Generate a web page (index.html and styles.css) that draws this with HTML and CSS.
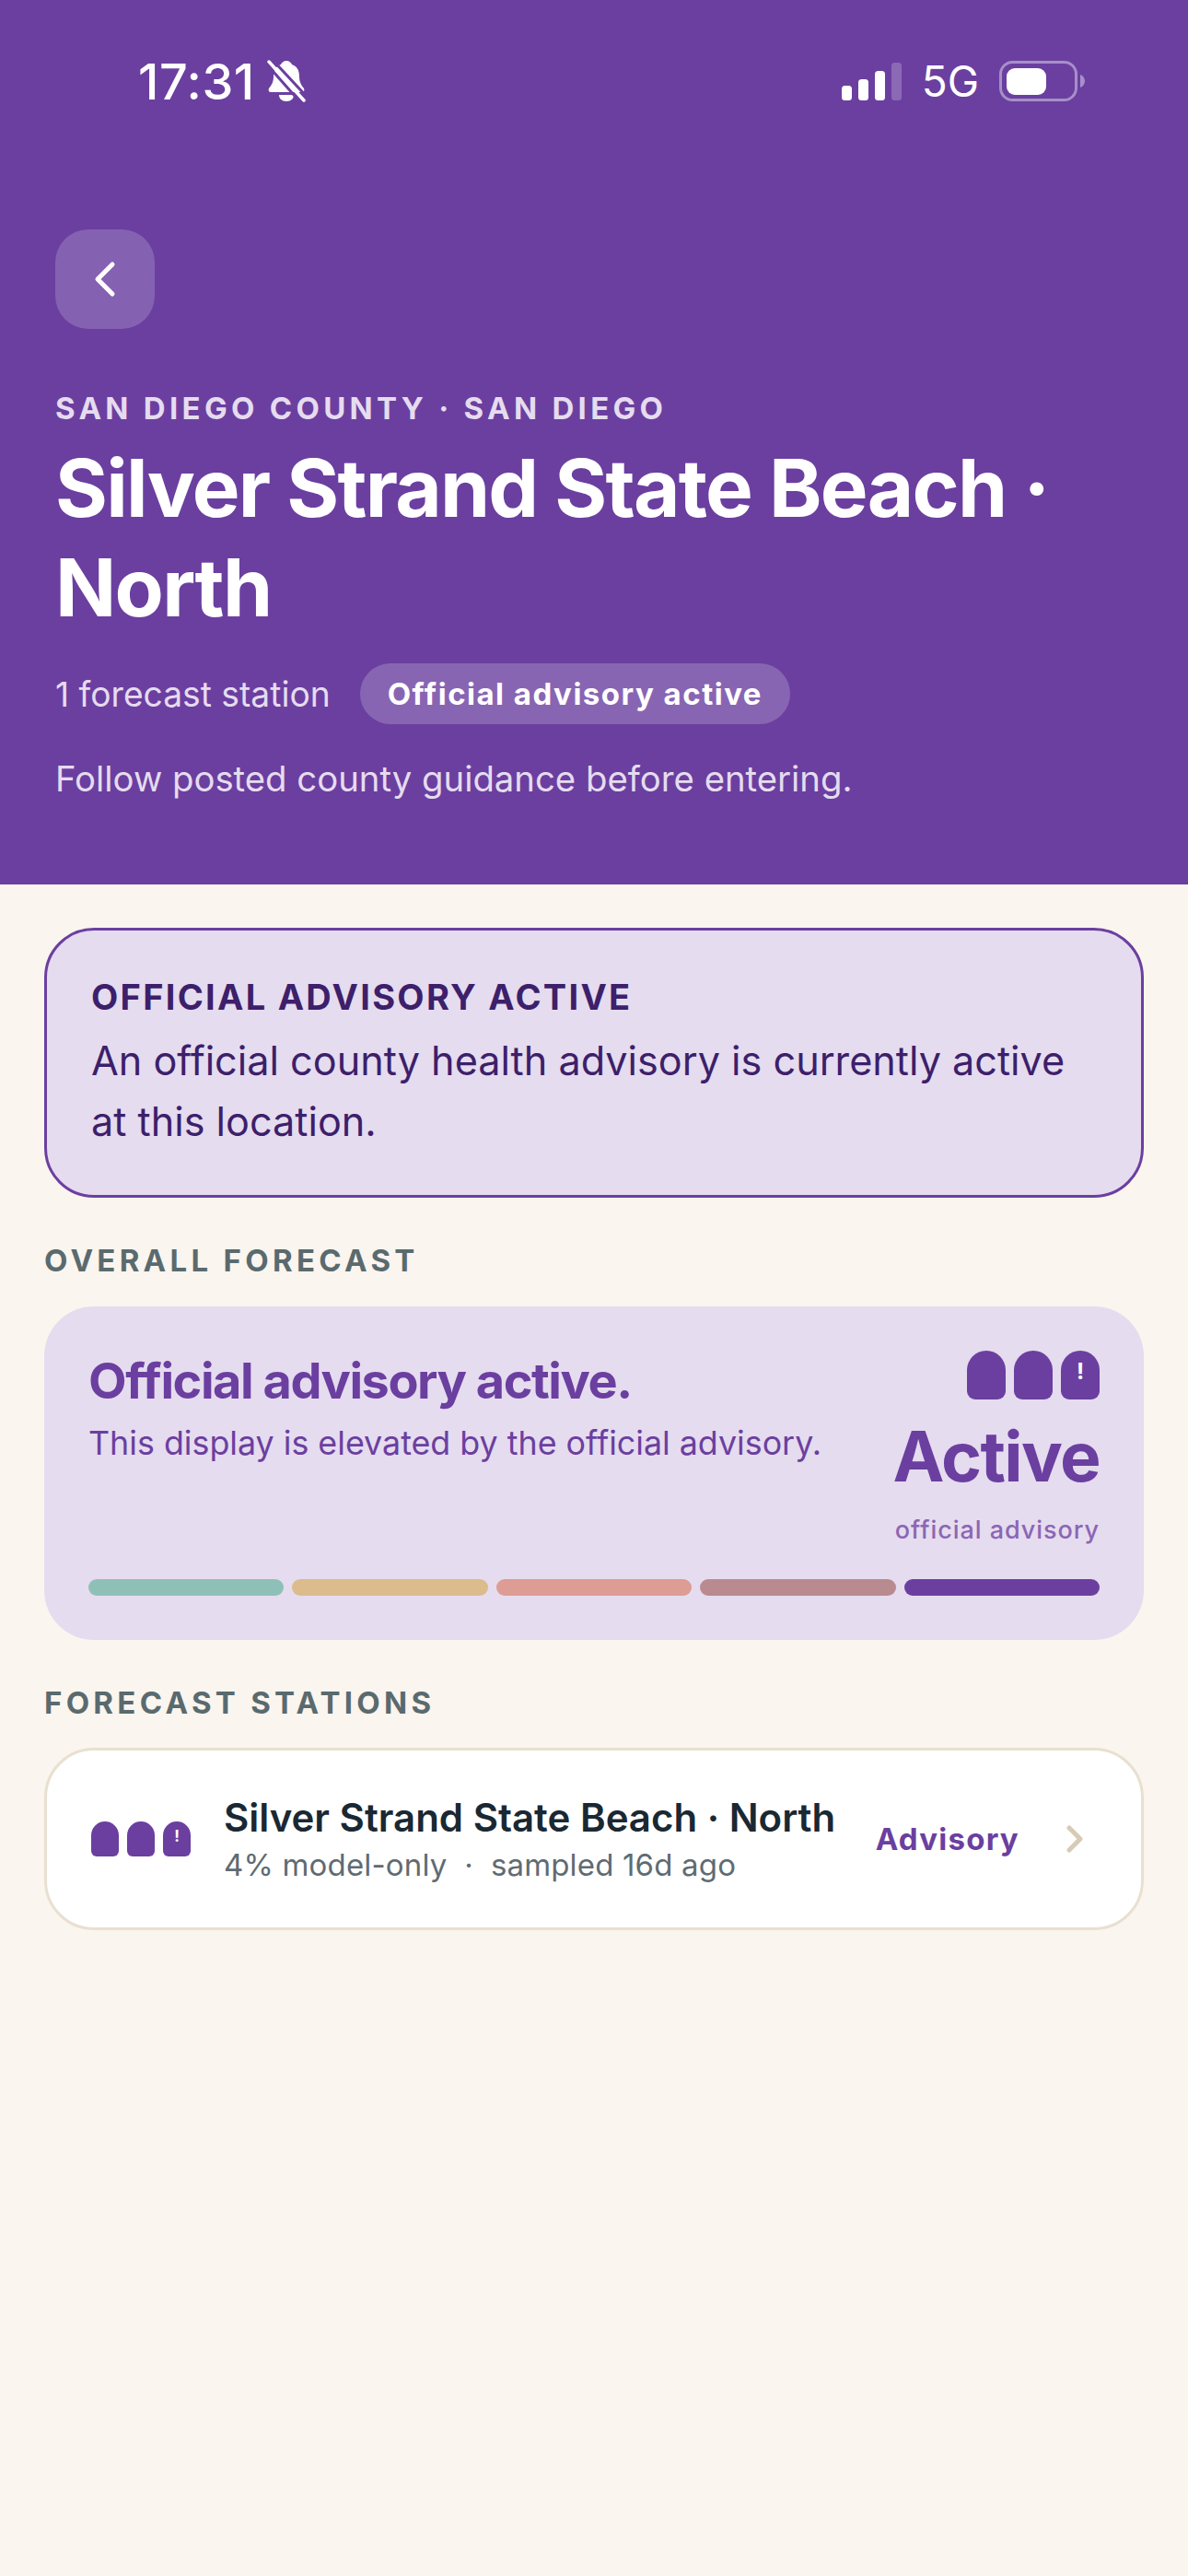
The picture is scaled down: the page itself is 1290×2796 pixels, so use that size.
FILE: index.html
```html
<!DOCTYPE html>
<html lang="en">
<head>
    <meta charset="UTF-8">
    <meta name="viewport" content="width=device-width, initial-scale=1.0">
    <title>Silver Strand State Beach</title>
    <link rel="stylesheet" href="styles.css">
</head>
<body>

<header class="hero">
    <div class="status-bar">
        <div class="status-left">
            <span class="status-time">17:31</span>
            <svg class="bell" width="42" height="46" viewBox="0 0 42 46">
                <path d="M21 1c3 0 5 2 6 4 6 2 8 7 8 13 0 6 2 9 5 13 1 2 0 4-2 4H4c-2 0-3-2-2-4 3-4 5-7 5-13 0-6 2-11 8-13 1-2 3-4 6-4z" fill="#fff"/>
                <path d="M13 38h16c0 4-3 7-8 7s-8-3-8-7z" fill="#fff"/>
                <path d="M5 -1L45 42" stroke="#6b3fa0" stroke-width="3"/>
                <path d="M2 2L40 44" stroke="#fff" stroke-width="3.5" stroke-linecap="round"/>
                <path d="M-1 4L37 47" stroke="#6b3fa0" stroke-width="3"/>
            </svg>
        </div>
        <div class="status-right">
            <svg width="65" height="41" viewBox="0 0 65 41">
                <rect x="0" y="25" width="11" height="16" rx="3.5" fill="#fff"/>
                <rect x="18" y="18" width="11" height="23" rx="3.5" fill="#fff"/>
                <rect x="36" y="9" width="11" height="32" rx="3.5" fill="#fff"/>
                <rect x="54" y="0" width="11" height="41" rx="3.5" fill="#fff" opacity="0.22"/>
            </svg>
            <span class="status-net">5G</span>
            <svg width="94" height="44" viewBox="0 0 94 44">
                <rect x="1.5" y="1.5" width="82" height="41" rx="13" fill="none" stroke="#a78fc8" stroke-width="3"/>
                <rect x="8" y="8" width="43" height="29" rx="9" fill="#fff"/>
                <path d="M88 15c3 1 5 4 5 7s-2 6-5 7z" fill="#a78fc8"/>
            </svg>
        </div>
    </div>

    <button class="back-button">
        <svg width="24" height="40" viewBox="0 0 24 40">
            <path d="M20 4L4 20l16 16" fill="none" stroke="#fff" stroke-width="5" stroke-linecap="round" stroke-linejoin="round"/>
        </svg>
    </button>

    <div class="eyebrow">SAN DIEGO COUNTY · SAN DIEGO</div>
    <h1 class="hero-title">Silver Strand State Beach · North</h1>
    <div class="hero-meta">
        <span>1 forecast station</span>
        <span class="pill">Official advisory active</span>
    </div>
    <p class="hero-note">Follow posted county guidance before entering.</p>
</header>

<main class="content">
    <section class="alert">
        <div class="alert-title">OFFICIAL ADVISORY ACTIVE</div>
        <p class="alert-text">An official county health advisory is currently active at this location.</p>
    </section>

    <h2 class="section-label">OVERALL FORECAST</h2>
    <section class="forecast">
        <div class="forecast-top">
            <div class="forecast-copy">
                <div class="forecast-title">Official advisory active.</div>
                <div class="forecast-sub">This display is elevated by the official advisory.</div>
            </div>
            <div class="forecast-side">
                <div class="drops drops-large">
                    <span class="drop"></span>
                    <span class="drop"></span>
                    <span class="drop">!</span>
                </div>
                <div class="forecast-level">Active</div>
                <div class="forecast-caption">official advisory</div>
            </div>
        </div>
        <div class="scale">
            <span class="scale-bar level-1"></span>
            <span class="scale-bar level-2"></span>
            <span class="scale-bar level-3"></span>
            <span class="scale-bar level-4"></span>
            <span class="scale-bar level-5"></span>
        </div>
    </section>

    <h2 class="section-label stations-label">FORECAST STATIONS</h2>
    <section class="station">
        <div class="drops drops-small">
            <span class="drop"></span>
            <span class="drop"></span>
            <span class="drop">!</span>
        </div>
        <div class="station-copy">
            <div class="station-name">Silver Strand State Beach · North</div>
            <div class="station-sub">4% model-only &nbsp;·&nbsp; sampled 16d ago</div>
        </div>
        <span class="station-tag">Advisory</span>
        <svg class="station-chevron" width="18" height="30" viewBox="0 0 18 30">
            <path d="M3 3l12 12L3 27" fill="none" stroke="#d6cbb5" stroke-width="5" stroke-linecap="round" stroke-linejoin="round"/>
        </svg>
    </section>
</main>

</body>
</html>
```

FILE: styles.css
```css
* {
    box-sizing: border-box;
}
body {
    font-family: Inter, "Liberation Sans", sans-serif;
    margin: 0;
    min-height: 100vh;
    background-color: #faf5ee;
    color: #1a2833;
}
h1, h2, p {
    margin: 0;
}

.hero {
    background-color: #6b3fa0;
    color: white;
    height: 960px;
    padding: 0 60px;
}
.status-bar {
    display: flex;
    justify-content: space-between;
    align-items: center;
    height: 176px;
    padding: 0 51px 0 90px;
}
.status-left {
    display: flex;
    align-items: center;
    gap: 13px;
}
.status-time {
    font-size: 54px;
    font-weight: 500;
    letter-spacing: 0.01em;
}
.status-right {
    display: flex;
    align-items: center;
    gap: 22px;
}
.status-net {
    font-size: 46px;
}
.back-button {
    display: flex;
    align-items: center;
    justify-content: center;
    width: 108px;
    height: 108px;
    margin-top: 73px;
    padding: 0;
    border: none;
    border-radius: 36px;
    background-color: rgba(255, 255, 255, 0.18);
}
.eyebrow {
    margin-top: 66px;
    font-size: 33px;
    font-weight: 700;
    line-height: 40px;
    letter-spacing: 0.13em;
    color: #e5dcef;
}
.hero-title {
    margin-top: 13px;
    font-size: 87px;
    font-weight: 700;
    line-height: 108px;
    letter-spacing: -0.02em;
}
.hero-meta {
    display: flex;
    align-items: center;
    gap: 32px;
    margin-top: 28px;
    font-size: 37.2px;
    color: #e5dcef;
}
.pill {
    padding: 0 30px;
    height: 66px;
    line-height: 66px;
    border-radius: 33px;
    background-color: rgba(255, 255, 255, 0.2);
    color: white;
    font-size: 33px;
    font-weight: 700;
    letter-spacing: 0.045em;
}
.hero-note {
    margin-top: 34px;
    font-size: 38.3px;
    line-height: 50px;
    color: #e5dcef;
}

.content {
    padding: 47px 48px 0;
}
.alert {
    height: 293px;
    padding: 49px 48px 0;
    border: 3px solid #6b3fa0;
    border-radius: 54px;
    background-color: #e5dcef;
    color: #3d1f6b;
}
.alert-title {
    font-size: 38px;
    font-weight: 700;
    line-height: 46px;
    letter-spacing: 0.06em;
}
.alert-text {
    margin-top: 13px;
    font-size: 43.2px;
    line-height: 66px;
}
.section-label {
    margin-top: 48px;
    font-size: 33px;
    font-weight: 700;
    line-height: 40px;
    letter-spacing: 0.13em;
    color: #5a6a6e;
}
.forecast {
    height: 362px;
    margin-top: 30px;
    padding: 48px 48px 0;
    border-radius: 54px;
    background-color: #e5dcef;
    color: #6b3fa0;
}
.forecast-top {
    display: flex;
    justify-content: space-between;
    height: 248px;
}
.forecast-title {
    font-size: 54px;
    font-weight: 700;
    line-height: 66px;
    letter-spacing: -0.027em;
}
.forecast-sub {
    margin-top: 10px;
    font-size: 35.8px;
    line-height: 48px;
}
.forecast-side {
    display: flex;
    flex-direction: column;
    align-items: flex-end;
}
.forecast-level {
    margin-top: 14px;
    font-size: 75px;
    font-weight: 700;
    line-height: 96px;
    letter-spacing: -0.022em;
}
.forecast-caption {
    margin-top: 13px;
    font-size: 27px;
    font-weight: 500;
    line-height: 38px;
    letter-spacing: 0.035em;
    color: #8b66b5;
}
.drops {
    display: flex;
    gap: 9px;
}
.drop {
    display: block;
    background-color: #6b3fa0;
    color: white;
    font-weight: 700;
    text-align: center;
}
.drops-large .drop {
    width: 42px;
    height: 53px;
    border-radius: 21px 21px 9px 9px;
    font-size: 24px;
    line-height: 46px;
}
.drops-small .drop {
    width: 30px;
    height: 38px;
    border-radius: 15px 15px 6px 6px;
    font-size: 17px;
    line-height: 33px;
}
.scale {
    display: flex;
    gap: 9px;
}
.scale-bar {
    flex: 1;
    height: 18px;
    border-radius: 9px;
}
.level-1 { background-color: #8fc0b8; }
.level-2 { background-color: #dcbb8c; }
.level-3 { background-color: #dd9c94; }
.level-4 { background-color: #b98a90; }
.level-5 { background-color: #6b3fa0; }

.stations-label {
    margin-top: 48px;
}
.station {
    display: flex;
    align-items: center;
    height: 198px;
    margin-top: 29px;
    padding: 0 63px 0 48px;
    border: 3px solid #e8e0d0;
    border-radius: 54px;
    background-color: white;
}
.station-copy {
    margin-left: 36px;
    padding-top: 2px;
    flex: 1;
}
.station-name {
    font-size: 42px;
    font-weight: 600;
    line-height: 54px;
}
.station-sub {
    font-size: 33px;
    line-height: 48px;
    letter-spacing: 0.005em;
    color: #5f6b73;
}
.station-tag {
    font-size: 33px;
    font-weight: 700;
    letter-spacing: 0.038em;
    color: #6b3fa0;
}
.station-chevron {
    margin-left: 51px;
}
```
